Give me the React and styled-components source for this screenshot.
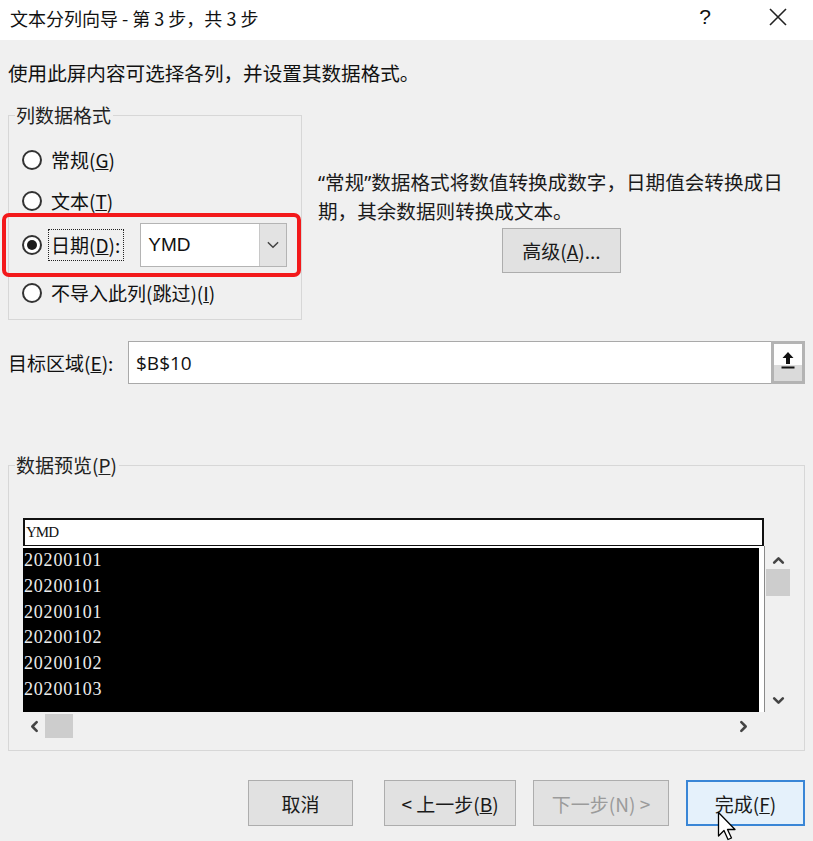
import React from "react";
import styled, { createGlobalStyle } from "styled-components";

const CJK = `"Noto Sans CJK SC", "Noto Sans", sans-serif`;

const Global = createGlobalStyle`
  html, body { margin: 0; padding: 0; }
  body {
    width: 813px;
    height: 841px;
    overflow: hidden;
    background: #f0f0f0;
    font-family: ${CJK};
    color: #111;
  }
`;

const Dialog = styled.div`
  position: relative;
  width: 813px;
  height: 841px;
  background: #f0f0f0;
  overflow: hidden;
`;

const TitleBar = styled.div`
  height: 40px;
  background: #fff;
  display: flex;
  align-items: center;
  padding-left: 10px;
  font-size: 18px;
  color: #111;
`;

const TitleText = styled.div`
  flex: 1;
  line-height: 24px;
  margin-top: -4px;
`;

const TitleButton = styled.div`
  width: 60px;
  height: 40px;
  display: flex;
  align-items: center;
  justify-content: center;
  font-family: "Liberation Sans", sans-serif;
  font-size: 21px;
  margin-top: -6px;
  margin-right: ${(p) => p.$mr || 0}px;
`;

const Body = styled.div`
  padding: 0 8px;
  display: flex;
  flex-direction: column;
`;

const Instruction = styled.div`
  margin-top: 20px;
  font-size: 19.6px;
  line-height: 26px;
`;

const TopRow = styled.div`
  display: flex;
  margin-top: 17px;
`;

const Group = styled.fieldset`
  margin: 0;
  margin-top: ${(p) => p.$mt || 0}px;
  padding: 0;
  border: 1px solid #d7d7d7;
  width: ${(p) => p.$w}px;
  height: ${(p) => p.$h}px;
  box-sizing: border-box;
  min-width: 0;
`;

const Legend = styled.legend`
  margin-left: 6px;
  padding: 0 2px 0 1px;
  font-size: 19px;
  line-height: 24px;
  color: #222;
`;

const RadioList = styled.div`
  display: flex;
  flex-direction: column;
  padding: 19px 0 0 13px;
`;

const RadioRow = styled.div`
  position: relative;
  display: flex;
  align-items: center;
  height: ${(p) => p.$h || 28}px;
  margin-top: ${(p) => p.$mt || 0}px;
  font-size: 19px;
`;

const Circle = styled.span`
  width: 20px;
  height: 20px;
  box-sizing: border-box;
  border-radius: 50%;
  border: 2px solid #333;
  background: #fff;
  display: flex;
  align-items: center;
  justify-content: center;
  margin-right: ${(p) => (p.$focus ? 6 : 9)}px;
  flex: none;
  &::after {
    content: "";
    width: 10px;
    height: 10px;
    border-radius: 50%;
    background: ${(p) => (p.$checked ? "#1a1a1a" : "transparent")};
  }
`;

const RadioLabel = styled.span`
  line-height: 28px;
  white-space: nowrap;
  ${(p) =>
    p.$focus &&
    `
    border: 1px dotted #222;
    padding: 1px 3px 1px 2px;
    height: 32px;
    box-sizing: border-box;
    display: flex;
    align-items: center;
  `}
`;

const Highlight = styled.div`
  position: absolute;
  left: -20px;
  top: -10px;
  width: 299px;
  height: 64px;
  box-sizing: border-box;
  border: 4px solid #f3191b;
  border-radius: 7px;
  pointer-events: none;
`;

const Select = styled.div`
  margin-left: 16px;
  width: 147px;
  height: 44px;
  box-sizing: border-box;
  border: 1px solid #b4b4b4;
  background: #fff;
  display: flex;
  align-items: stretch;
`;

const SelectValue = styled.div`
  flex: 1;
  display: flex;
  align-items: center;
  padding-left: 7px;
  font-family: "Liberation Sans", sans-serif;
  font-size: 19px;
  font-weight: 500;
  color: #111;
`;

const SelectArrow = styled.div`
  width: 26px;
  background: #e3e3e3;
  border-left: 1px solid #c8c8c8;
  display: flex;
  align-items: center;
  justify-content: center;
`;

const RightCol = styled.div`
  flex: 1;
  margin-left: 16px;
  padding-top: 65px;
  display: flex;
  flex-direction: column;
  align-items: center;
`;

const Desc = styled.div`
  align-self: stretch;
  font-size: 19.6px;
  line-height: 28px;
  color: #1a1a1a;
  white-space: nowrap;
`;

const Quote = styled.span`
  font-family: "Noto Sans", "Liberation Sans", sans-serif;
`;

const Btn = styled.div`
  width: ${(p) => p.$w}px;
  height: ${(p) => p.$h || 46}px;
  margin-top: ${(p) => p.$mt || 0}px;
  margin-right: ${(p) => p.$mr || 0}px;
  box-sizing: border-box;
  border: ${(p) => (p.$primary ? "2px solid #3a86d6" : "1px solid #adadad")};
  background: ${(p) => (p.$primary ? "#e5f1fb" : "#e1e1e1")};
  color: ${(p) => (p.$disabled ? "#9b9b9b" : "#1a1a1a")};
  display: flex;
  align-items: center;
  justify-content: center;
  font-size: 19px;
  white-space: nowrap;
`;

const TargetRow = styled.div`
  display: flex;
  align-items: center;
  margin-top: 21px;
  height: 43px;
`;

const TargetLabel = styled.div`
  width: 120px;
  font-size: 19px;
  line-height: 26px;
`;

const TargetInput = styled.div`
  flex: 1;
  height: 43px;
  box-sizing: border-box;
  border: 1px solid #a9a9a9;
  border-right: none;
  background: #fff;
  display: flex;
  align-items: center;
  padding-left: 7px;
  font-family: "Open Sans", "Liberation Sans", sans-serif;
  font-size: 19px;
`;

const InputText = styled.div`
  flex: 1;
`;

const UploadBtn = styled.div`
  width: 34px;
  height: 43px;
  box-sizing: border-box;
  border: 3px solid #b3b3b3;
  background: linear-gradient(#fdfdfd 0 58%, #dadada 58% 100%);
  display: flex;
  align-items: flex-start;
  justify-content: center;
  padding-top: 6px;
`;

const PreviewArea = styled.div`
  padding: 41px 0 0 14px;
  display: grid;
  grid-template-columns: 741px 26px;
  grid-template-rows: 28px 166px 26px;
`;

const Header = styled.div`
  grid-column: 1;
  grid-row: 1;
  box-sizing: border-box;
  border: 2px solid #111;
  border-bottom: 1px solid #111;
  background: #fff;
  font-family: "Liberation Serif", serif;
  font-size: 15px;
  letter-spacing: -1px;
  line-height: 24px;
  padding-left: 1px;
  color: #111;
`;

const DataArea = styled.div`
  grid-column: 1;
  grid-row: 2;
  background: #000;
  border-top: 2px solid #fff;
  border-right: 5px solid #fff;
  box-shadow: 1px 0 0 #8a8a8a;
  box-sizing: border-box;
  padding-left: 1px;
  overflow: hidden;
`;

const DataRow = styled.div`
  font-family: "Liberation Serif", serif;
  font-size: 18px;
  letter-spacing: 0.8px;
  line-height: 25.8px;
  color: #ececec;
`;

const VScroll = styled.div`
  grid-column: 2;
  grid-row: 2;
  display: flex;
  flex-direction: column;
  align-items: center;
  padding: 6px 0 0 2px;
`;

const VThumb = styled.div`
  width: 24px;
  height: 27px;
  background: #cdcdcd;
  margin-top: 1px;
`;

const Spacer = styled.div`
  flex: 1;
`;

const HScroll = styled.div`
  grid-column: 1;
  grid-row: 3;
  display: flex;
  align-items: center;
  padding: 2px 0 0 4px;
`;

const HThumb = styled.div`
  width: 28px;
  height: 24px;
  background: #cdcdcd;
  margin-left: 4px;
`;

const ArrowBox = styled.div`
  width: ${(p) => p.$w || 16}px;
  height: ${(p) => p.$h || 16}px;
  display: flex;
  align-items: center;
  justify-content: center;
  margin-bottom: ${(p) => p.$mb || 0}px;
  margin-right: ${(p) => p.$mr || 0}px;
`;

const ButtonRow = styled.div`
  display: flex;
  justify-content: flex-end;
  gap: 17px;
  margin-top: 29px;
`;

const Cursor = styled.svg`
  position: absolute;
  left: 717px;
  top: 811px;
`;

const Chevron = ({ dir, size = 12, color = "#333", sw = 2.2 }) => {
  const d = {
    up: "M2 8 L6 4 L10 8",
    down: "M2 4 L6 8 L10 4",
    left: "M8 2 L4 6 L8 10",
    right: "M4 2 L8 6 L4 10",
  }[dir];
  return (
    <svg width={size} height={size} viewBox="0 0 12 12">
      <path d={d} fill="none" stroke={color} strokeWidth={sw} strokeLinecap="round" strokeLinejoin="round" />
    </svg>
  );
};

const rows = ["20200101", "20200101", "20200101", "20200102", "20200102", "20200103"];

export default function App() {
  return (
    <>
      <Global />
      <Dialog>
        <TitleBar>
          <TitleText>文本分列向导 - 第 3 步，共 3 步</TitleText>
          <TitleButton $mr={13}>?</TitleButton>
          <TitleButton $mr={5}>
            <svg width="18" height="18" viewBox="0 0 18 18">
              <path d="M1 1 L17 17 M17 1 L1 17" stroke="#222" strokeWidth="1.6" />
            </svg>
          </TitleButton>
        </TitleBar>
        <Body>
          <Instruction>使用此屏内容可选择各列，并设置其数据格式。</Instruction>
          <TopRow>
            <Group $w={294} $h={217}>
              <Legend>列数据格式</Legend>
              <RadioList>
                <RadioRow>
                  <Circle />
                  <RadioLabel>常规(<u>G</u>)</RadioLabel>
                </RadioRow>
                <RadioRow $mt={13}>
                  <Circle />
                  <RadioLabel>文本(<u>T</u>)</RadioLabel>
                </RadioRow>
                <RadioRow $mt={8} $h={44}>
                  <Circle $checked $focus />
                  <RadioLabel $focus>日期(<u>D</u>):</RadioLabel>
                  <Select>
                    <SelectValue>YMD</SelectValue>
                    <SelectArrow>
                      <Chevron dir="down" size={14} color="#444" sw={1.3} />
                    </SelectArrow>
                  </Select>
                  <Highlight />
                </RadioRow>
                <RadioRow $mt={12}>
                  <Circle />
                  <RadioLabel>不导入此列(跳过)(<u>I</u>)</RadioLabel>
                </RadioRow>
              </RadioList>
            </Group>
            <RightCol>
              <Desc>
                <Quote>“</Quote>常规<Quote>”</Quote>数据格式将数值转换成数字，日期值会转换成日
                <br />
                期，其余数据则转换成文本。
              </Desc>
              <Btn $w={119} $h={45} $mt={3}>
                高级(<u>A</u>)...
              </Btn>
            </RightCol>
          </TopRow>
          <TargetRow>
            <TargetLabel>
              目标区域(<u>E</u>):
            </TargetLabel>
            <TargetInput>
              <InputText>$B$10</InputText>
              <UploadBtn>
                <svg width="16" height="20" viewBox="0 0 16 20">
                  <path d="M8 2 L2.5 8 H6 V14 H10 V8 H13.5 Z" fill="#111" />
                  <rect x="1.5" y="16.5" width="13" height="2" fill="#111" />
                </svg>
              </UploadBtn>
            </TargetInput>
          </TargetRow>
          <Group $w={797} $h={298} $mt={69}>
            <Legend>数据预览(<u>P</u>)</Legend>
            <PreviewArea>
              <Header>YMD</Header>
              <DataArea>
                {rows.map((r, i) => (
                  <DataRow key={i}>{r}</DataRow>
                ))}
              </DataArea>
              <VScroll>
                <ArrowBox $h={16}>
                  <Chevron dir="up" size={13} color="#444" sw={2.4} />
                </ArrowBox>
                <VThumb />
                <Spacer />
                <ArrowBox $h={16} $mb={4}>
                  <Chevron dir="down" size={13} color="#444" sw={2.4} />
                </ArrowBox>
              </VScroll>
              <HScroll>
                <ArrowBox $w={14}>
                  <Chevron dir="left" size={13} color="#444" sw={2.4} />
                </ArrowBox>
                <HThumb />
                <Spacer />
                <ArrowBox $w={14} $mr={14}>
                  <Chevron dir="right" size={13} color="#444" sw={2.4} />
                </ArrowBox>
              </HScroll>
            </PreviewArea>
          </Group>
          <ButtonRow>
            <Btn $w={105} $mr={14}>取消</Btn>
            <Btn $w={132}>
              &lt; 上一步(<u>B</u>)
            </Btn>
            <Btn $w={136} $disabled>
              下一步(N) &gt;
            </Btn>
            <Btn $w={119} $primary>
              完成(<u>F</u>)
            </Btn>
          </ButtonRow>
        </Body>
        <Cursor width="24" height="34" viewBox="0 0 24 34">
          <path
            d="M1.5 1.5 L1.5 25 L7 19.5 L11 28.5 L14.5 27 L10.5 18.5 L18 18.5 Z"
            fill="#fff"
            stroke="#000"
            strokeWidth="1.3"
            strokeLinejoin="round"
          />
        </Cursor>
      </Dialog>
    </>
  );
}
